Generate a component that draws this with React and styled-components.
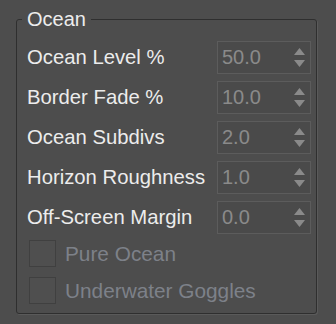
import React from "react";
import styled, { createGlobalStyle } from "styled-components";

const GlobalStyle = createGlobalStyle`
  html, body {
    margin: 0;
    padding: 0;
    background: #4d4d4d;
  }
  body {
    font-family: "Liberation Sans", Arial, sans-serif;
  }
`;

const params = [
  { label: "Ocean Level %", value: "50.0" },
  { label: "Border Fade %", value: "10.0" },
  { label: "Ocean Subdivs", value: "2.0" },
  { label: "Horizon Roughness", value: "1.0" },
  { label: "Off-Screen Margin", value: "0.0" },
];

const options = ["Pure Ocean", "Underwater Goggles"];

const SpinArrows = () => (
  <svg width="11" height="20" viewBox="0 0 11 20">
    <polygon points="5.5,0 11,7 0,7" fill="#8a8a8a" />
    <polygon points="0,12 11,12 5.5,19" fill="#8a8a8a" />
  </svg>
);

const App = () => (
  <Page>
    <GlobalStyle />
    <Group>
      <Title>Ocean</Title>
      <ParamGrid>
        {params.map((p) => (
          <React.Fragment key={p.label}>
            <Label>{p.label}</Label>
            <Spinner>
              <SpinValue>{p.value}</SpinValue>
              <SpinArrows />
            </Spinner>
          </React.Fragment>
        ))}
      </ParamGrid>
      <Options>
        {options.map((o) => (
          <CheckRow key={o}>
            <CheckBox />
            <CheckLabel>{o}</CheckLabel>
          </CheckRow>
        ))}
      </Options>
    </Group>
  </Page>
);

export default App;

const Page = styled.div`
  width: 336px;
  height: 324px;
  box-sizing: border-box;
  padding: 7px 0 0 16px;
`;

const Group = styled.fieldset`
  margin: 0;
  width: 301px;
  box-sizing: border-box;
  padding: 10px 5px 9px 10px;
  border: 1px solid #2f2f2f;
  border-radius: 3px;
  box-shadow: 1px 1px 0 #5a5a5a;
`;

const Title = styled.legend`
  margin-left: -5px;
  padding: 0 5px;
  font-size: 20px;
  line-height: 24px;
  color: #ececec;
`;

const ParamGrid = styled.div`
  display: grid;
  grid-template-columns: 1fr 94px;
  grid-auto-rows: 33px;
  row-gap: 7px;
  align-items: center;
`;

const Label = styled.div`
  font-size: 20.3px;
  color: #ececec;
  white-space: nowrap;
`;

const Spinner = styled.div`
  height: 33px;
  box-sizing: border-box;
  display: flex;
  align-items: center;
  justify-content: space-between;
  padding: 0 5px 0 4px;
  background: #4a4a4a;
  border: 1px solid #5c5c5c;
`;

const SpinValue = styled.span`
  font-size: 20px;
  color: #8a8a8a;
`;

const Options = styled.div`
  display: flex;
  flex-direction: column;
  gap: 10px;
  margin-top: 6px;
`;

const CheckRow = styled.div`
  display: flex;
  align-items: center;
  gap: 9px;
  padding-left: 2px;
`;

const CheckBox = styled.div`
  width: 27px;
  height: 27px;
  box-sizing: border-box;
  background: #4f4f4f;
  border: 1px solid #404040;
`;

const CheckLabel = styled.span`
  font-size: 20.8px;
  color: #7d8189;
`;
